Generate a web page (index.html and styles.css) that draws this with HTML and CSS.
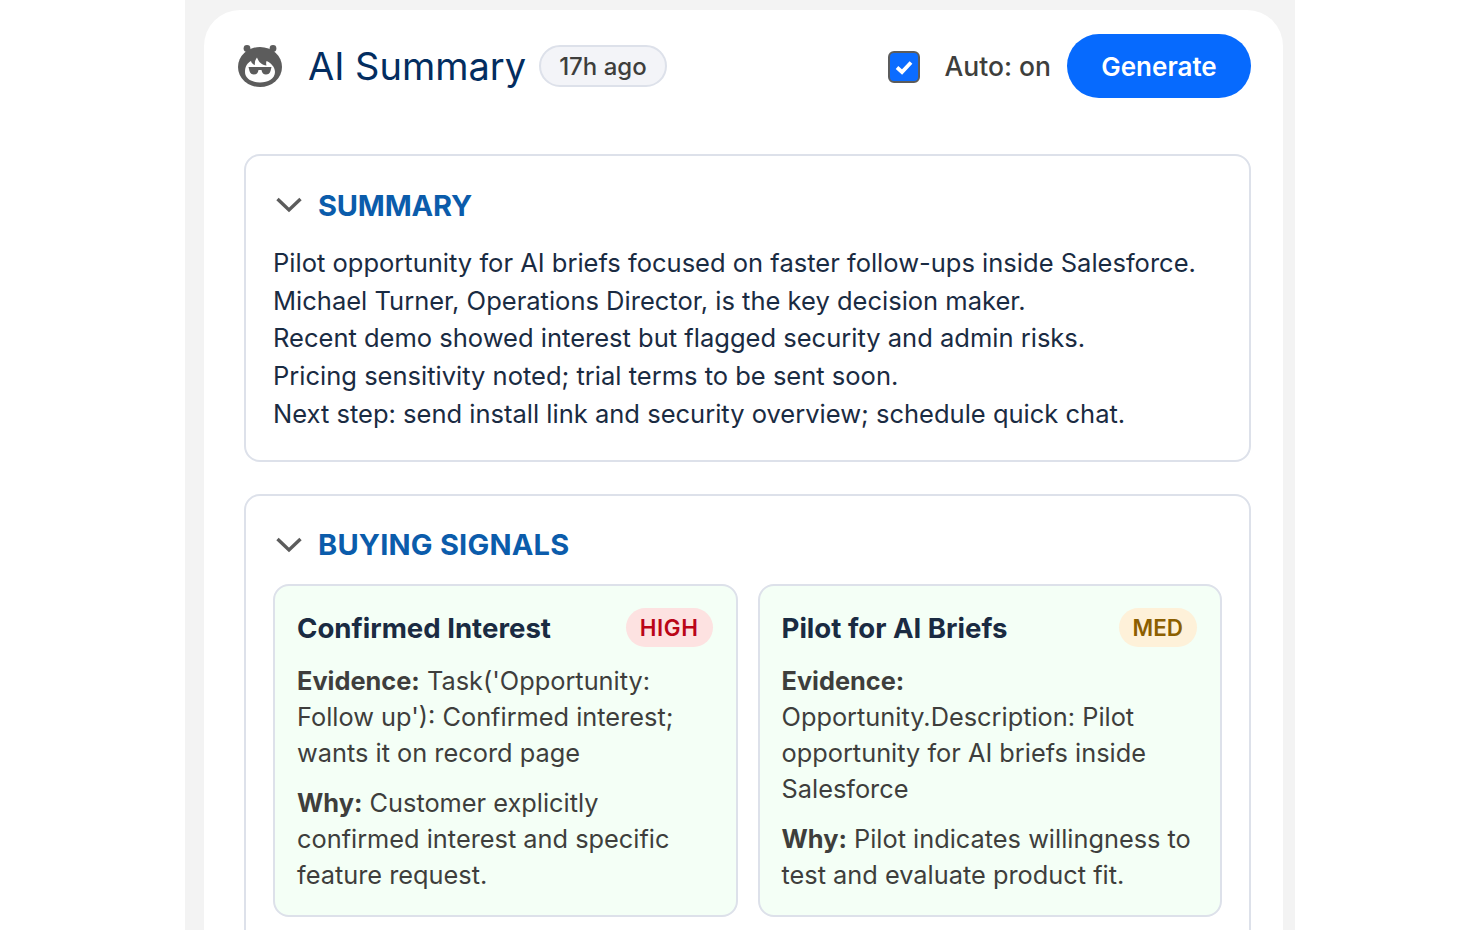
FILE: index.html
```html
<!DOCTYPE html>
<html lang="en">
<head>
    <meta charset="UTF-8">
    <title>AI Summary</title>
    <link rel="stylesheet" href="styles.css">
</head>
<body>
    <div class="page">
        <div class="panel">
            <div class="panel-header">
                <svg class="logo" viewBox="0 0 44 44" width="44" height="44">
                    <circle cx="9" cy="4.5" r="3.4" fill="#5c5c5c"/>
                    <circle cx="35" cy="4.5" r="3.4" fill="#5c5c5c"/>
                    <ellipse cx="22" cy="23" rx="22" ry="20" fill="#5c5c5c"/>
                    <path d="M7 28 C7 22 9.5 19 13 17 C13.5 19 15 20.5 17 21 C16.5 19 17 16 19 13.5 C20.5 18 24 21 28.5 21.5 C28 20 28 18.5 28.5 17 C33 19 37 23 37 28 C37 34.5 30 38.5 22 38.5 C14 38.5 7 34.5 7 28 Z" fill="#fff"/>
                    <path d="M10.5 23 H33.5 L32.5 27 C32 29.5 30 30.5 28 30.5 C25.5 30.5 24 29 23.5 26 H20.5 C20 29 18.5 30.5 16 30.5 C14 30.5 12 29.5 11.5 27 Z" fill="#5c5c5c"/>
                </svg>
                <h1>AI Summary</h1>
                <span class="age-pill">17h ago</span>
                <div class="auto-toggle">
                    <span class="checkbox">
                        <svg viewBox="0 0 32 32" width="32" height="32"><path d="M9 16.5 L14 21 L23 11.5" fill="none" stroke="#fff" stroke-width="3.8"/></svg>
                    </span>
                    <span class="auto-label">Auto: on</span>
                </div>
                <button class="generate">Generate</button>
            </div>

            <div class="section summary">
                <div class="section-title">
                    <svg class="chevron" viewBox="0 0 30 20" width="30" height="20"><path d="M4.5 4 L16 15 L27.5 4" fill="none" stroke="#5c5c5c" stroke-width="3.4"/></svg>
                    <h2>SUMMARY</h2>
                </div>
                <div class="summary-text">
                    <p>Pilot opportunity for AI briefs focused on faster follow-ups inside Salesforce.</p>
                    <p>Michael Turner, Operations Director, is the key decision maker.</p>
                    <p>Recent demo showed interest but flagged security and admin risks.</p>
                    <p>Pricing sensitivity noted; trial terms to be sent soon.</p>
                    <p>Next step: send install link and security overview; schedule quick chat.</p>
                </div>
            </div>

            <div class="section signals">
                <div class="section-title">
                    <svg class="chevron" viewBox="0 0 30 20" width="30" height="20"><path d="M4.5 4 L16 15 L27.5 4" fill="none" stroke="#5c5c5c" stroke-width="3.4"/></svg>
                    <h2>BUYING SIGNALS</h2>
                </div>
                <div class="signal-grid">
                    <div class="signal">
                        <div class="signal-head">
                            <h3>Confirmed Interest</h3>
                            <span class="level high">HIGH</span>
                        </div>
                        <p><b>Evidence:</b> Task('Opportunity: Follow up'): Confirmed interest; wants it on record page</p>
                        <p><b>Why:</b> Customer explicitly confirmed interest and specific feature request.</p>
                    </div>
                    <div class="signal">
                        <div class="signal-head">
                            <h3>Pilot for AI Briefs</h3>
                            <span class="level med">MED</span>
                        </div>
                        <p><b>Evidence:</b> Opportunity.Description: Pilot opportunity for AI briefs inside Salesforce</p>
                        <p><b>Why:</b> Pilot indicates willingness to test and evaluate product fit.</p>
                    </div>
                </div>
            </div>
        </div>
    </div>
</body>
</html>
```

FILE: styles.css
```css
html, body {
    margin: 0;
    height: 100%;
    overflow: hidden;
    background: white;
}

body {
    font-family: 'Inter', 'Liberation Sans', sans-serif;
}

.page {
    width: 1110px;
    height: 930px;
    margin-left: 185px;
    padding: 10px 12px 0 19px;
    box-sizing: border-box;
    background: #f3f3f3;
    overflow: hidden;
}

.panel {
    background: white;
    border-radius: 36px 36px 0 0;
    padding: 24px 32px 0 40px;
    min-height: 920px;
    box-sizing: border-box;
}

.panel-header {
    display: flex;
    align-items: center;
    height: 64px;
    margin-bottom: 56px;
}

.logo {
    margin-left: -6px;
    margin-right: 26px;
    flex-shrink: 0;
}

h1 {
    margin: 0;
    font-size: 38px;
    font-weight: 400;
    color: #032d60;
}

.age-pill {
    margin-left: 13px;
    height: 38px;
    padding: 0 18px;
    display: flex;
    align-items: center;
    background: #f3f4f8;
    border: 2px solid #dde1ea;
    border-radius: 21px;
    font-size: 24px;
    font-weight: 550;
    color: #3e3e3c;
}

.auto-toggle {
    margin-left: auto;
    display: flex;
    align-items: center;
    gap: 24px;
}

.checkbox {
    width: 32px;
    height: 32px;
    margin-top: 2px;
    background: #0b6cff;
    border: 2px solid #5c5c5c;
    border-radius: 6px;
    box-sizing: border-box;
    display: flex;
    align-items: center;
    justify-content: center;
}

.checkbox svg {
    flex-shrink: 0;
}

.auto-label {
    font-size: 26.5px;
    font-weight: 550;
    color: #3e3e3c;
}

.generate {
    margin-left: 16px;
    width: 184px;
    height: 64px;
    background: #066afe;
    color: white;
    border: none;
    border-radius: 32px;
    font-family: inherit;
    font-size: 26px;
    font-weight: 600;
}

.section {
    border: 2px solid #dde1ea;
    border-radius: 16px;
    padding: 27px 27px 0;
    margin-bottom: 32px;
}

.section-title {
    display: flex;
    align-items: center;
    gap: 15px;
    height: 44px;
    margin-bottom: 17px;
}

.chevron {
    flex-shrink: 0;
}

h2 {
    margin: 0;
    font-size: 29px;
    font-weight: 700;
    color: #0b5cab;
    letter-spacing: 0.2px;
}

.summary h2 {
    letter-spacing: -0.2px;
}

.summary {
    padding-bottom: 27px;
}

.summary-text p {
    margin: 0;
    font-size: 25.53px;
    line-height: 37.7px;
    color: #1a2b42;
}

.signal-grid {
    display: grid;
    grid-template-columns: 1fr 1fr;
    gap: 20px;
    padding-bottom: 32px;
}

.signal {
    background: #f4fff6;
    border: 2px solid #dde1ea;
    border-radius: 16px;
    padding: 22px 23px 8px 22px;
}

.signal-head {
    display: flex;
    align-items: center;
    justify-content: space-between;
    margin-bottom: 16px;
}

h3 {
    margin: 0;
    padding-top: 2px;
    font-size: 27.6px;
    font-weight: 700;
    color: #1a2b42;
}

.level {
    height: 39px;
    padding: 0 14px;
    display: flex;
    align-items: center;
    border-radius: 20px;
    font-size: 22.4px;
    font-weight: 600;
    letter-spacing: 0.6px;
}

.level.high {
    background: #fde2e1;
    color: #ba0517;
}

.level.med {
    background: #fef1d9;
    color: #8c5f00;
    letter-spacing: 0;
}

.signal p {
    margin: 0 0 14px;
    font-size: 25.35px;
    line-height: 36px;
    color: #3e3e3c;
}
```
